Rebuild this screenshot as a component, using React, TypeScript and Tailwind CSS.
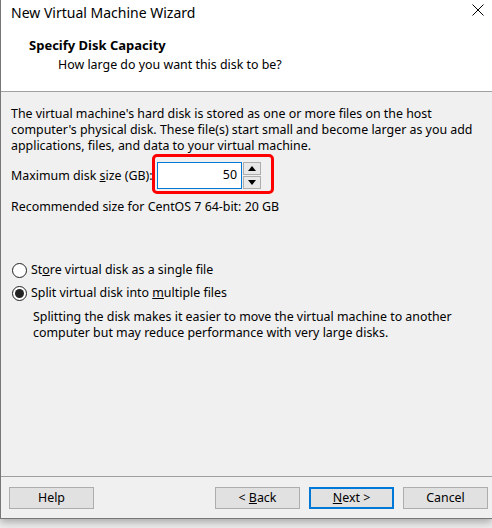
import { ReactNode } from "react";

const font = { fontFamily: '"Noto Sans", "Liberation Sans", sans-serif' };

function Btn({ children, primary }: { children: ReactNode; primary?: boolean }) {
  return (
    <div
      className={
        "flex h-[22px] w-[85px] items-center justify-center bg-[#e1e1e1] text-[12.4px] text-black " +
        (primary ? "border-2 border-[#0078d7]" : "border border-[#adadad]")
      }
    >
      <span className="whitespace-pre">{children}</span>
    </div>
  );
}

function Radio({ checked, children }: { checked?: boolean; children: ReactNode }) {
  return (
    <div className="flex h-[16px] items-center">
      <div className="ml-[11px] flex h-[15px] w-[15px] items-center justify-center rounded-full border border-[#222] bg-white">
        {checked && <div className="h-[9px] w-[9px] rounded-full bg-[#222]" />}
      </div>
      <span className="ml-[4px] text-[12.4px] leading-[16px] text-black">{children}</span>
    </div>
  );
}

export default function App() {
  return (
    <div className="h-[528px] w-[492px] overflow-hidden bg-[#ededed]" style={font}>
      <div className="flex h-[519px] w-[492px] flex-col border-b border-l border-[#777] bg-[#f0f0f0] shadow-[0_3px_8px_rgba(0,0,0,0.3)]">
        {/* title bar */}
        <div className="relative h-[23px] bg-white">
          <span className="ml-[10px] text-[14px] leading-[23px] text-black">New Virtual Machine Wizard</span>
          <svg className="absolute left-[471px] top-[4px]" width="12" height="12" viewBox="0 0 12 12">
            <path d="M0.5 0.5 L11.5 11.5 M11.5 0.5 L0.5 11.5" stroke="#000" strokeWidth="1" />
          </svg>
        </div>

        {/* header */}
        <div className="h-[69px] border-b border-[#a0a0a0] bg-white pt-[14px]">
          <div className="ml-[28px] text-[13px] font-bold leading-[16px] text-black">Specify Disk Capacity</div>
          <div className="ml-[57px] mt-[4px] text-[12.4px] leading-[16px] text-black">
            How large do you want this disk to be?
          </div>
        </div>

        {/* body */}
        <div className="flex-1 pt-[14px]">
          <p className="ml-[10px] text-[12.4px] leading-[16px] text-black">
            The virtual machine's hard disk is stored as one or more files on the host
            <br />
            computer's physical disk. These file(s) start small and become larger as you add
            <br />
            applications, files, and data to your virtual machine.
          </p>

          <div className="mt-[8px] flex h-[27px] items-center">
            <span className="ml-[10px] w-[146px] text-[12.4px] leading-[16px] text-black">
              Maximum disk <u>s</u>ize (GB):
            </span>
            <div className="relative flex h-[27px]">
              <div className="flex h-[27px] w-[85px] items-center justify-end border border-[#0078d7] bg-white pr-[4px] text-[12.4px] text-black">
                50
              </div>
              <div className="ml-[1px] flex w-[18px] flex-col gap-[1px]">
                <div className="flex h-[13px] items-center justify-center border border-[#adadad] bg-[#e8e8e8]">
                  <svg width="8" height="5" viewBox="0 0 8 5">
                    <path d="M0 5 L4 0 L8 5 Z" fill="#000" />
                  </svg>
                </div>
                <div className="flex h-[13px] items-center justify-center border border-[#adadad] bg-[#e8e8e8]">
                  <svg width="8" height="5" viewBox="0 0 8 5">
                    <path d="M0 0 L8 0 L4 5 Z" fill="#000" />
                  </svg>
                </div>
              </div>
              <div className="absolute -left-[5px] -top-[8px] h-[40px] w-[122px] rounded-[5px] border-[3px] border-[#f00]" />
            </div>
          </div>

          <div className="ml-[10px] mt-[10px] text-[12.4px] leading-[16px] text-black">
            Recommended size for CentOS 7 64-bit: 20 GB
          </div>

          <div className="mt-[47px]">
            <Radio>
              St<u>o</u>re virtual disk as a single file
            </Radio>
          </div>
          <div className="mt-[7px]">
            <Radio checked>
              Split virtual disk into <u>m</u>ultiple files
            </Radio>
          </div>
          <p className="ml-[32px] mt-[8px] text-[12.4px] leading-[16px] text-black">
            Splitting the disk makes it easier to move the virtual machine to another
            <br />
            computer but may reduce performance with very large disks.
          </p>
        </div>

        {/* footer */}
        <div className="flex h-[42px] border-t border-[#a0a0a0] pt-[10px]">
          <div className="ml-[8px]">
            <Btn>Help</Btn>
          </div>
          <div className="ml-[121px] flex gap-[9px]">
            <Btn>
              {"< "}
              <u>B</u>ack
            </Btn>
            <Btn primary>
              <u>N</u>ext{" >"}
            </Btn>
            <Btn>Cancel</Btn>
          </div>
        </div>
      </div>
    </div>
  );
}
